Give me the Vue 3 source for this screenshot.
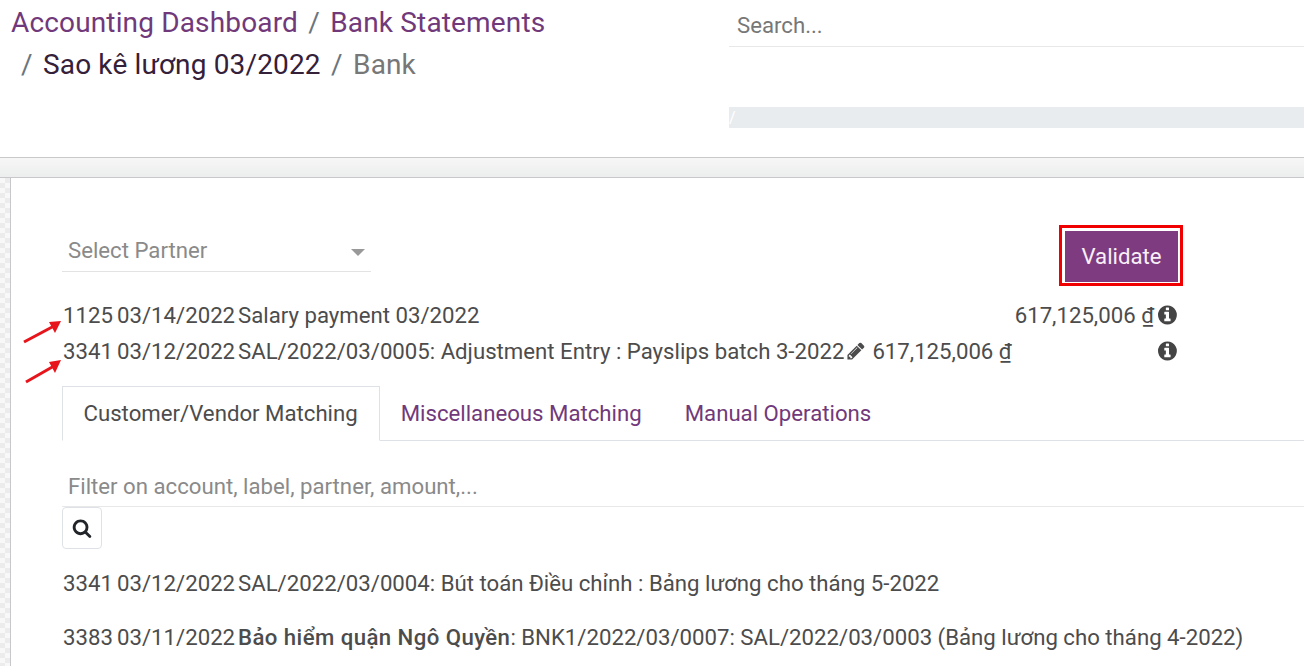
<template>
  <div class="page">
    <header class="control-panel">
      <div class="crumbs">
        <a>Accounting Dashboard</a><span class="sep">/</span><a>Bank Statements</a>
        <br />
        <span class="sep first">/</span><span class="dark">Sao kê lương 03/2022</span><span class="sep">/</span><span class="active">Bank</span>
      </div>
      <div class="search-col">
        <div class="search-input">Search...</div>
        <div class="search-bar"><span>/</span></div>
      </div>
    </header>

    <div class="band"></div>

    <main class="sheet-wrap">
      <div class="sheet">
        <div class="top-row">
          <div class="partner">
            <span>Select Partner</span>
            <i class="caret" />
          </div>
          <div class="validate-mark">
            <button class="validate">Validate</button>
          </div>
        </div>

        <div class="line line-first">
          <span class="code">1125</span>
          <span class="date">03/14/2022</span>
          <span class="label">Salary payment 03/2022</span>
          <span class="amount">617,125,006 ₫</span>
          <svg class="info" viewBox="0 0 1792 1792"><path :d="infoPath" /></svg>
        </div>
        <div class="line line-second">
          <span class="code">3341</span>
          <span class="date">03/12/2022</span>
          <span class="label">SAL/2022/03/0005: Adjustment Entry : Payslips batch 3-2022</span>
          <svg class="pencil" viewBox="0 0 1792 1792"><path :d="pencilPath" /></svg>
          <span class="amount-inline">617,125,006 ₫</span>
          <svg class="info" viewBox="0 0 1792 1792"><path :d="infoPath" /></svg>
        </div>

        <nav class="tabs">
          <a v-for="(tab, i) in tabs" :key="tab" class="tab" :class="{ active: i === 0 }">{{ tab }}</a>
        </nav>

        <div class="filter">Filter on account, label, partner, amount,...</div>
        <button class="search-btn">
          <svg viewBox="0 0 1792 1792"><path :d="searchPath" /></svg>
        </button>

        <div v-for="row in rows" :key="row.label" class="line match">
          <span class="code">{{ row.code }}</span>
          <span class="date">{{ row.date }}</span>
          <span class="label"><b v-if="row.partner">{{ row.partner }}</b>{{ row.label }}</span>
        </div>
      </div>
    </main>

    <svg class="arrows" width="70" height="100" viewBox="0 0 70 100">
      <path d="M24 52 L54 36" />
      <path d="M61 31 L49 32 L55 43 Z" class="head" />
      <path d="M26 92 L54 76" />
      <path d="M61 70 L49 72 L55 83 Z" class="head" />
    </svg>
  </div>
</template>

<script setup>
const infoPath = 'M1024 1376v-160q0-14-9-23t-23-9h-96v-512q0-14-9-23t-23-9h-320q-14 0-23 9t-9 23v160q0 14 9 23t23 9h96v320h-96q-14 0-23 9t-9 23v160q0 14 9 23t23 9h448q14 0 23-9t9-23zm-128-896v-160q0-14-9-23t-23-9h-192q-14 0-23 9t-9 23v160q0 14 9 23t23 9h192q14 0 23-9t9-23zm640 416q0 209-103 385.5t-279.5 279.5-385.5 103-385.5-103-279.5-279.5-103-385.5 103-385.5 279.5-279.5 385.5-103 385.5 103 279.5 279.5 103 385.5z'
const pencilPath = 'M491 1536l91-91-235-235-91 91v107h128v128h107zm523-928q0-22-22-22-10 0-17 7l-542 542q-7 7-7 17 0 22 22 22 10 0 17-7l542-542q7-7 7-17zm-54-192l416 416-832 832h-416v-416zm683 96q0 53-37 90l-166 166-416-416 166-165q36-38 90-38 53 0 91 38l235 234q37 39 37 91z'
const searchPath = 'M1216 832q0-185-131.5-316.5t-316.5-131.5-316.5 131.5-131.5 316.5 131.5 316.5 316.5 131.5 316.5-131.5 131.5-316.5zm512 832q0 52-38 90t-90 38q-54 0-90-38l-343-342q-179 124-399 124-143 0-273.5-55.5t-225-150-150-225-55.5-273.5 55.5-273.5 150-225 225-150 273.5-55.5 273.5 55.5 225 150 150 225 55.5 273.5q0 220-124 399l343 343q37 37 37 90z'

const tabs = ['Customer/Vendor Matching', 'Miscellaneous Matching', 'Manual Operations']

const rows = [
  { code: '3341', date: '03/12/2022', partner: '', label: 'SAL/2022/03/0004: Bút toán Điều chỉnh : Bảng lương cho tháng 5-2022' },
  { code: '3383', date: '03/11/2022', partner: 'Bảo hiểm quận Ngô Quyền', label: ': BNK1/2022/03/0007: SAL/2022/03/0003 (Bảng lương cho tháng 4-2022)' }
]
</script>

<style>
html,
body {
  margin: 0;
  background: #fff;
  overflow: hidden;
}
</style>

<style scoped>
.page {
  position: relative;
  width: 1304px;
  height: 666px;
  overflow: hidden;
  font-family: Roboto, sans-serif;
  font-size: 22.2px;
  color: #4c4c4c;
}

.control-panel {
  display: flex;
  height: 157px;
  border-bottom: 1px solid #c9c9c9;
  box-sizing: content-box;
}

.crumbs {
  width: 729px;
  flex: none;
  box-sizing: border-box;
  padding: 2px 0 0 11px;
  font-size: 28px;
  line-height: 42px;
  letter-spacing: 0.15px;
  color: #71397a;
}

.sep {
  color: #6c757d;
  margin: 0 10.3px;
}

.sep.first {
  margin-left: 10px;
}

.dark {
  color: #35203a;
}

.active {
  color: #777;
}

.search-col {
  flex: 1;
}

.search-input {
  height: 47px;
  box-sizing: border-box;
  padding: 12px 0 0 8px;
  border-bottom: 1px solid #e8e8e8;
  line-height: 26px;
  color: #777;
}

.search-bar {
  height: 21px;
  margin-top: 60px;
  background: #e9ecef;
  color: #fff;
  font-size: 16px;
  line-height: 21px;
}

.band {
  height: 19px;
  background: linear-gradient(#f7f7f7, #eceded);
  border-bottom: 1px solid #c8c8cc;
}

.sheet-wrap {
  padding-left: 10px;
  height: 490px;
  background: repeating-conic-gradient(#ececec 0 25%, #f8f8f8 0 50%) 0 0 / 10px 10px;
}

.sheet {
  height: 100%;
  background: #fff;
  border-left: 1px solid #c8c8cc;
  padding: 48px 0 0 51px;
  box-sizing: border-box;
}

.top-row {
  display: flex;
  height: 71px;
}

.partner {
  display: flex;
  align-items: center;
  justify-content: space-between;
  width: 309px;
  height: 46px;
  box-sizing: border-box;
  padding: 2px 6px 0;
  border-bottom: 1px solid #e3e3e3;
  color: #8a8a8a;
}

.caret {
  width: 0;
  height: 0;
  margin-top: 5px;
  border-top: 7px solid #999;
  border-left: 7px solid transparent;
  border-right: 7px solid transparent;
}

.validate-mark {
  margin: -1px 0 0 688px;
  width: 124px;
  height: 61px;
  box-sizing: border-box;
  border: 3px solid #f00000;
  padding: 3px 2px 1px 3px;
  flex: none;
}

.validate {
  display: block;
  width: 100%;
  height: 100%;
  border: 0;
  padding: 0 0 2px;
  background: #7f3b80;
  color: #f8f0f8;
  font: inherit;
}

.line {
  display: flex;
  align-items: center;
  height: 36px;
  padding-left: 1px;
  white-space: nowrap;
}

.code {
  width: 54px;
  flex: none;
}

.date {
  width: 121px;
  flex: none;
}

.amount {
  margin-left: auto;
}

.info {
  width: 22px;
  height: 22px;
  fill: #444;
  flex: none;
}

.line-first .info {
  margin-left: 4px;
  margin-right: 124px;
}

.line-second .info {
  margin-left: auto;
  margin-right: 124px;
}

.pencil {
  width: 20px;
  height: 20px;
  fill: #4c4c4c;
  margin-left: 2px;
  flex: none;
}

.amount-inline {
  margin-left: 6px;
}

.tabs {
  display: flex;
  height: 55px;
  margin-top: 17px;
  border-bottom: 1px solid #dee2e6;
  box-sizing: border-box;
}

.tab {
  padding: 0 21px;
  line-height: 54px;
  color: #71397a;
  height: 55px;
  box-sizing: border-box;
}

.tab.active {
  color: #4c4c4c;
  background: #fff;
  border: 1px solid #dee2e6;
  border-bottom-color: #fff;
  line-height: 52px;
  padding: 0 21px 0 20.5px;
}

.tab:last-child {
  margin-left: 1px;
}

.filter {
  height: 66px;
  box-sizing: border-box;
  padding: 32px 0 0 6px;
  line-height: 26px;
  border-bottom: 1px solid #e8e8e8;
  color: #8a8a8a;
}

.search-btn {
  display: flex;
  align-items: center;
  justify-content: center;
  width: 40px;
  height: 42px;
  margin-bottom: 7px;
  padding: 0;
  background: #fff;
  border: 1px solid #dee2e6;
  border-radius: 4px;
}

.search-btn svg {
  width: 20px;
  height: 20px;
  fill: #212529;
}

.match {
  height: 54px;
}

.match b {
  font-weight: 500;
  letter-spacing: 0.43px;
}

.arrows {
  position: absolute;
  left: 0;
  top: 290px;
  pointer-events: none;
}

.arrows path {
  stroke: #e8141c;
  stroke-width: 3;
  fill: none;
}

.arrows .head {
  fill: #e8141c;
  stroke: none;
}
</style>
